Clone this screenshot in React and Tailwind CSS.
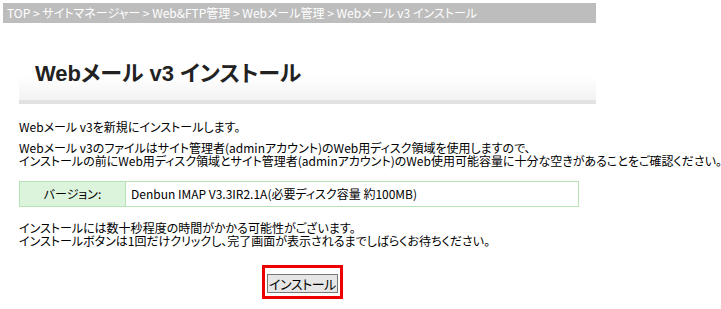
export default function App() {
  const jp = { fontFamily: '"Noto Sans CJK JP", "Liberation Sans", sans-serif', fontFeatureSettings: '"palt"' }
  return (
    <div className="w-[721px] h-[309px] bg-white text-black overflow-hidden" style={jp}>
      {/* パンくず */}
      <div className="pt-[3px] pl-[3px]">
        <div className="w-[593px] h-[20px] bg-[#bdbdbd] text-white text-[12px] leading-[20px] pl-[4px] whitespace-nowrap">
          TOP &gt; サイトマネージャー &gt; Web&amp;FTP管理 &gt; Webメール管理 &gt; Webメール v3 インストール
        </div>
      </div>

      <div className="pl-[19px]">
        {/* タイトル */}
        <div className="w-[577px] mt-[17px]">
          <div className="h-[60px] bg-gradient-to-b from-white from-60% to-[#f3f3f3] flex items-end pb-[13px] pl-[16px]">
            <h1
              className="text-[22px] font-bold leading-[26px] text-[#222]"
              style={{ fontFamily: '"Liberation Sans", "Noto Sans CJK JP", sans-serif' }}
            >
              Webメール v3 インストール
            </h1>
          </div>
          <div className="h-[4px] bg-[#e2e2e2]" />
        </div>

        {/* 本文 */}
        <div className="text-[12px] leading-[13px] whitespace-nowrap">
          <p className="mt-[16px]">Webメール v3を新規にインストールします。</p>
          <p className="mt-[8px]">Webメール v3のファイルはサイト管理者(adminアカウント)のWeb用ディスク領域を使用しますので、</p>
          <p>インストールの前にWeb用ディスク領域とサイト管理者(adminアカウント)のWeb使用可能容量に十分な空きがあることをご確認ください。</p>
        </div>

        {/* バージョン */}
        <div className="mt-[14px] w-[560px] h-[26px] border border-[#b6e3b6] flex text-[12px]">
          <div className="w-[106px] bg-[#dcf3dc] border-r border-[#b6e3b6] flex items-center justify-center">
            バージョン:
          </div>
          <div className="flex-1 flex items-center pl-[5px]">
            Denbun IMAP V3.3IR2.1A(必要ディスク容量 約100MB)
          </div>
        </div>

        <div className="mt-[14px] text-[12px] leading-[13px] whitespace-nowrap">
          <p>インストールには数十秒程度の時間がかかる可能性がございます。</p>
          <p>インストールボタンは1回だけクリックし、完了画面が表示されるまでしばらくお待ちください。</p>
        </div>

        {/* ボタン */}
        <div className="mt-[18px] flex pl-[243px]">
          <div className="border-[3px] border-[#ee0000] p-[2px]">
            <button className="h-[19px] px-[1px] bg-[#e6e6e6] border border-[#777] text-[13px] leading-[17px] tracking-[-0.4px] text-black whitespace-nowrap">
              インストール
            </button>
          </div>
        </div>
      </div>
    </div>
  )
}
